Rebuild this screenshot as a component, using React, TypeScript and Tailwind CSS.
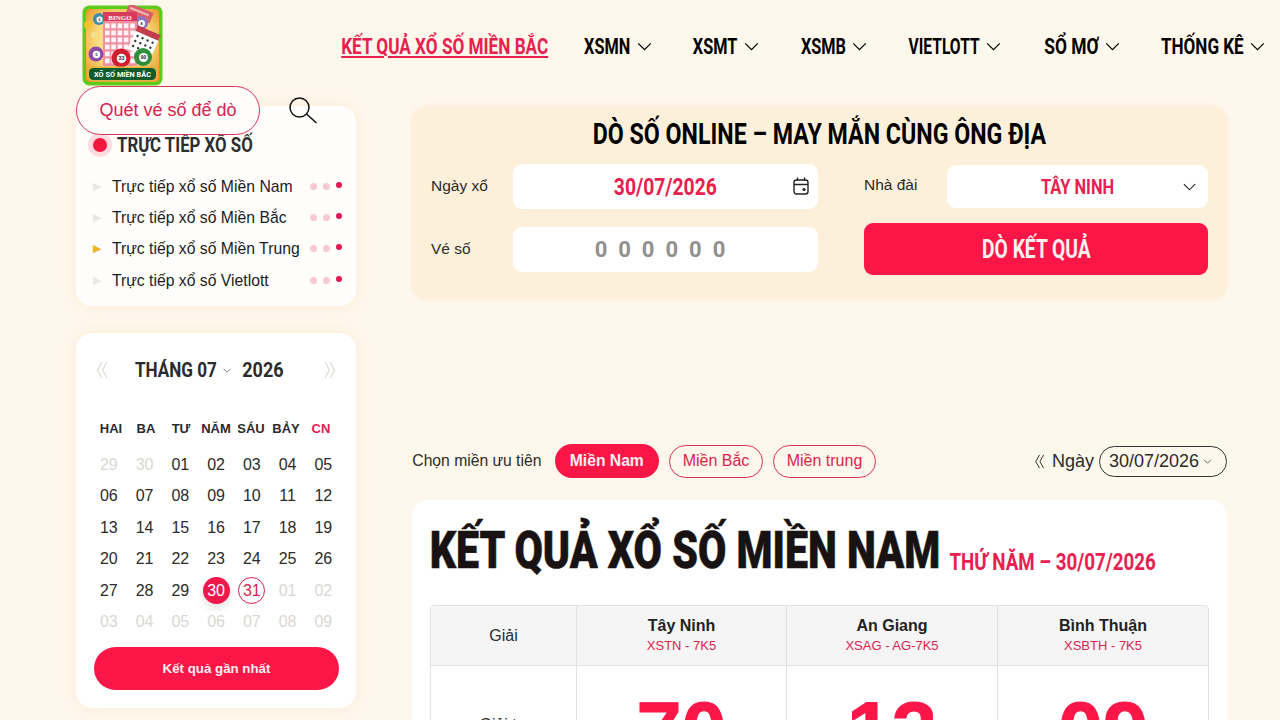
import React from "react";

const sans = "font-['Liberation_Sans',Arial,sans-serif]";
const cond = "font-['Roboto','Liberation_Sans',sans-serif]";

function Chevron({ className = "" }: { className?: string }) {
  return (
    <svg viewBox="0 0 16 10" className={className} fill="none" stroke="currentColor" strokeWidth="1.4">
      <path d="M1 1.5 8 8.5 15 1.5" />
    </svg>
  );
}

function Narrow({ w, s, className = "", children }: { w: string; s: string; className?: string; children: React.ReactNode }) {
  return (
    <span className={`flex shrink-0 justify-center whitespace-nowrap ${w} ${className}`}>
      <span className={`inline-block ${s}`}>{children}</span>
    </span>
  );
}

function Ball({ x, y, r, c, n }: { x: number; y: number; r: number; c: string; n: string }) {
  return (
    <g>
      <circle cx={x} cy={y} r={r} fill={c} />
      <circle cx={x + 0.5} cy={y + 0.5} r={r * 0.5} fill="#fff" />
      <text x={x + 0.5} y={y + 2} textAnchor="middle" fontSize={r * 0.55} fontWeight="700" fill="#222" fontFamily="Liberation Sans">{n}</text>
    </g>
  );
}

function Logo() {
  return (
    <svg viewBox="0 0 81 81" className="h-[81px] w-[81px]">
      <defs>
        <radialGradient id="lg" cx="50%" cy="45%" r="65%">
          <stop offset="0%" stopColor="#fff6c8" />
          <stop offset="60%" stopColor="#f8d677" />
          <stop offset="100%" stopColor="#ee9a2e" />
        </radialGradient>
      </defs>
      <rect x="0.5" y="0.5" width="80" height="80" rx="7" fill="#5ccb1c" />
      <rect x="4" y="4" width="73" height="73" rx="4" fill="url(#lg)" />
      <circle cx="6" cy="20" r="4" fill="#f5c22e" />
      <circle cx="12" cy="30" r="3" fill="#f6e08f" />
      <g transform="rotate(22 58 10)">
        <rect x="44" y="3" width="26" height="11" fill="#d9606b" />
        <rect x="46" y="6" width="20" height="2" fill="#f3b8b8" />
      </g>
      <Ball x={59} y={18} r={7} c="#8f76bd" n="8" />
      <Ball x={17} y={14} r={6} c="#3d8da6" n="6" />
      <rect x="21" y="7" width="34" height="54" rx="1" fill="#f0909f" />
      <rect x="21" y="7" width="34" height="9" fill="#d83a5c" />
      <text x="38" y="14.8" textAnchor="middle" fontSize="7" fontWeight="700" fill="#fff" fontFamily="Liberation Serif">BINGO</text>
      {[0, 1, 2, 3, 4, 5].map((r) =>
        [0, 1, 2, 3, 4].map((c) => (
          <rect key={`${r}-${c}`} x={23 + c * 6.3} y={18.5 + r * 7} width="4.6" height="4.8" fill="#fff" opacity="0.92" />
        ))
      )}
      <g transform="rotate(24 62 36)">
        <rect x="50" y="26" width="25" height="24" fill="#fff" />
        <rect x="50" y="24" width="25" height="6" fill="#c43d4f" />
        {[0, 1, 2].map((r) =>
          [0, 1, 2, 3].map((c) => (
            <circle key={`t${r}-${c}`} cx={54 + c * 5.5} cy={34 + r * 5.5} r="1.2" fill="#333" />
          ))
        )}
      </g>
      <Ball x={14} y={49} r={7.5} c="#8e4aa6" n="5" />
      <Ball x={39} y={53} r={9.5} c="#cf1f30" n="33" />
      <Ball x={61} y={52} r={9} c="#2f8f3d" n="90" />
      <rect x="5" y="61.5" width="71" height="15" rx="5" fill="#e0b43c" />
      <rect x="7" y="63" width="67" height="12" rx="4.5" fill="#0f5b2c" />
      <text x="40.5" y="72" textAnchor="middle" fontSize="8" fontWeight="700" fill="#fff" fontFamily="Roboto" textLength="57" lengthAdjust="spacingAndGlyphs">XỔ SỐ MIỀN BẮC</text>
    </svg>
  );
}

const navItems: [string, string, string, string][] = [
  ["XSMN", "w-[46px]", "ml-[7px] mr-[41px]", "scale-x-[0.74]"],
  ["XSMT", "w-[44px]", "ml-[7px] mr-[41px]", "scale-x-[0.74]"],
  ["XSMB", "w-[46px]", "ml-[6px] mr-[42px]", "scale-x-[0.74]"],
  ["VIETLOTT", "w-[71px]", "ml-[6px] mr-[42px]", "scale-x-[0.71]"],
  ["SỔ MƠ", "w-[56px]", "ml-[6px] mr-[41px]", "scale-x-[0.79]"],
  ["THỐNG KÊ", "w-[83px]", "ml-[6px] mr-0", "scale-x-[0.775]"],
];

function Header() {
  return (
    <header className="flex h-[86px] items-start">
      <div className="ml-[82px] mt-[5px] w-[81px] shrink-0">
        <Logo />
      </div>
      <nav className={`ml-[179px] mt-[35px] flex h-[24px] items-center text-[22px] font-bold leading-[24px] text-black ${cond}`}>
        <Narrow w="w-[206px]" s="scale-x-[0.78]" className="mr-[36px] text-[#e8204f] underline underline-offset-2">
          KẾT QUẢ XỔ SỐ MIỀN BẮC
        </Narrow>
        {navItems.map(([t, w, m, s]) => (
          <React.Fragment key={t}>
            <Narrow w={w} s={s}>{t}</Narrow>
            <Chevron className={`-mt-[2px] h-[9px] w-[15px] shrink-0 ${m}`} />
          </React.Fragment>
        ))}
      </nav>
    </header>
  );
}

const lives: [string, string][] = [
  ["Trực tiếp xổ số Miền Nam", "text-[#e9e9e3]"],
  ["Trực tiếp xổ số Miền Bắc", "text-[#e9e9e3]"],
  ["Trực tiếp xổ số Miền Trung", "text-[#eeb422]"],
  ["Trực tiếp xổ số Vietlott", "text-[#e9e9e3]"],
];

function LiveCard() {
  return (
    <section className="relative h-[200px] rounded-[16px] bg-white/90 pl-[17px] pr-[18px] pt-[26px] shadow-[0_0_14px_rgba(250,225,190,0.45)]">
      <div className="flex h-[26px] items-center">
        <span className="h-[14px] w-[14px] rounded-full bg-[#f6173f] shadow-[0_0_0_5px_rgba(246,23,63,0.16)]" />
        <Narrow w="w-[134px]" s="scale-x-[0.8]" className={`ml-[11px] text-[21px] font-bold leading-[26px] text-[#2e2e2e] ${cond}`}>
          TRỰC TIẾP XỔ SỐ
        </Narrow>
      </div>
      <ul className={`mt-[13px] flex flex-col text-[15.75px] leading-[31.2px] text-[#1c1c1c] ${sans}`}>
        {lives.map(([t, c]) => (
          <li key={t} className="flex h-[31.2px] items-center">
            <span className={`w-[19px] shrink-0 text-[11px] ${c}`}>▶</span>
            <span className="w-[198px] shrink-0 whitespace-nowrap">{t}</span>
            <span className="flex items-center gap-[6px]">
              <i className="h-[7px] w-[7px] rounded-full bg-[#f9c9d3]" />
              <i className="h-[7px] w-[7px] rounded-full bg-[#f9c9d3]" />
              <i className="-mt-[3px] h-[6px] w-[6px] rounded-full bg-[#e01a4f]" />
            </span>
          </li>
        ))}
      </ul>
    </section>
  );
}

const weeks: string[][] = [
  ["29", "30", "01", "02", "03", "04", "05"],
  ["06", "07", "08", "09", "10", "11", "12"],
  ["13", "14", "15", "16", "17", "18", "19"],
  ["20", "21", "22", "23", "24", "25", "26"],
  ["27", "28", "29", "30", "31", "01", "02"],
  ["03", "04", "05", "06", "07", "08", "09"],
];
const days = ["HAI", "BA", "TƯ", "NĂM", "SÁU", "BẢY", "CN"];

function DoubleChevron({ dir, className = "" }: { dir: "l" | "r"; className?: string }) {
  return (
    <svg viewBox="0 0 12 18" className={className} fill="none" stroke="currentColor" strokeWidth="1.1">
      {dir === "l" ? <path d="M6 1 1.5 9 6 17M11 1 6.5 9 11 17" /> : <path d="M1 1 5.5 9 1 17M6 1 10.5 9 6 17" />}
    </svg>
  );
}

function Calendar() {
  return (
    <section className={`mt-[27px] h-[375px] rounded-[16px] bg-white px-[15px] pt-[24px] shadow-[0_0_14px_rgba(250,225,190,0.45)] ${sans}`}>
      <div className="flex h-[26px] items-center pl-[5px] text-[#d9d9d3]">
        <DoubleChevron dir="l" className="h-[18px] w-[12px]" />
        <Narrow w="w-[81px]" s="scale-x-[0.855]" className={`ml-[27px] text-[20px] font-bold leading-[26px] text-[#2b2b2b] ${cond}`}>
          THÁNG 07
        </Narrow>
        <Chevron className="ml-[6px] h-[5px] w-[10px] text-[#444]" />
        <Narrow w="w-[42px]" s="scale-x-[0.9]" className={`ml-[10px] text-[20px] font-bold leading-[26px] text-[#2b2b2b] ${cond}`}>
          2026
        </Narrow>
        <DoubleChevron dir="r" className="ml-[43px] h-[18px] w-[12px] -translate-x-[3px]" />
      </div>
      <div className="ml-[2.5px] mt-[36px] grid grid-cols-[repeat(7,35px)] text-center text-[13px] font-bold leading-[20px] text-[#2b2b2b]">
        {days.map((d) => (
          <span key={d} className={`whitespace-nowrap ${d === "CN" ? "text-[#e01a4f]" : ""}`}>{d}</span>
        ))}
      </div>
      <div className="mt-[10px] grid grid-cols-[repeat(7,35.75px)] auto-rows-[31.5px] text-center text-[16px] text-[#2b2b2b]">
        {weeks.map((w, i) =>
          w.map((d, j) => {
            const muted = (i === 0 && j < 2) || (i === 4 && j > 4) || i === 5;
            if (i === 4 && j === 3)
              return (
                <span key={d + i} className="flex items-center justify-center">
                  <span className="flex h-[27px] w-[27px] items-center justify-center rounded-full bg-[#f0174a] text-white shadow-[0_4px_10px_rgba(0,0,0,0.12)]">{d}</span>
                </span>
              );
            if (i === 4 && j === 4)
              return (
                <span key={d + i} className="flex items-center justify-center">
                  <span className="flex h-[27px] w-[27px] items-center justify-center rounded-full border border-[#e01a4f] text-[#d81f4f]">{d}</span>
                </span>
              );
            return (
              <span key={d + i} className={`flex items-center justify-center ${muted ? "text-[#d8d8d2]" : ""}`}>{d}</span>
            );
          })
        )}
      </div>
      <button className="ml-[3px] mt-[9px] flex h-[43px] w-[245px] items-center justify-center rounded-full bg-[#fb1648] text-[13.3px] font-bold text-[#ffeef0]">
        Kết quả gần nhất
      </button>
    </section>
  );
}

function Sidebar() {
  return (
    <aside className="relative ml-[76px] mt-[20px] w-[280px] shrink-0">
      <LiveCard />
      <Calendar />
      <div className="absolute -top-[20px] left-0 flex items-center">
        <div className={`flex h-[49px] w-[184px] items-center justify-center rounded-full border border-[#d9305c] bg-[#fffdfa] text-[18px] text-[#d81f4f] ${sans}`}>
          Quét vé số để dò
        </div>
        <svg viewBox="0 0 30 30" className="ml-[28px] h-[30px] w-[30px]" fill="none" stroke="#111" strokeWidth="1.5">
          <circle cx="11.5" cy="11.5" r="9.5" />
          <path d="M18.5 18 28.5 27" />
        </svg>
      </div>
    </aside>
  );
}

function Lookup() {
  return (
    <section className="h-[193px] rounded-[16px] bg-[#fdf0da] pt-[13px] shadow-[0_0_4px_rgba(245,225,190,0.5)]">
      <div className="flex justify-center text-[29px] font-bold leading-[30px] text-black">
        <Narrow w="w-[452px]" s="scale-x-[0.8]" className={cond}>
          DÒ SỐ ONLINE – MAY MẮN CÙNG ÔNG ĐỊA
        </Narrow>
      </div>
      <div className={`mt-[15px] grid grid-cols-[82px_305px_46px_83px_261px] grid-rows-[45px_45px] items-center gap-y-[18px] pl-[19px] text-[15.5px] text-[#2b2b2b] ${sans}`}>
        <span className="-mt-[2px]">Ngày xổ</span>
        <div className="relative flex h-[45px] items-center justify-center rounded-[9px] bg-white pt-[3px]">
          <Narrow w="w-[103px]" s="scale-x-[0.84]" className={`text-[23px] font-bold text-[#e8204f] ${cond}`}>30/07/2026</Narrow>
          <svg viewBox="0 0 16 18" className="absolute right-[9px] top-[13px] h-[18px] w-[16px]" fill="none" stroke="#222" strokeWidth="1.4">
            <rect x="1" y="3" width="14" height="14" rx="2.5" />
            <path d="M1 7.5h14M4.5 0.5v3M11.5 0.5v3" />
            <circle cx="11" cy="12.5" r="1.6" fill="#222" stroke="none" />
          </svg>
        </div>
        <span />
        <span className="-mt-[4px]">Nhà đài</span>
        <div className="relative flex h-[43px] items-center justify-center rounded-[9px] bg-white">
          <Narrow w="w-[74px]" s="scale-x-[0.82]" className={`text-[20px] font-bold text-[#e8204f] ${cond}`}>TÂY NINH</Narrow>
          <Chevron className="absolute right-[12px] top-[18px] h-[8px] w-[13px] text-[#222]" />
        </div>
        <span className="-mt-[2px]">Vé số</span>
        <div className={`flex h-[45px] items-center justify-center rounded-[9px] bg-white text-[22px] font-bold tracking-[11px] text-[#909090] ${cond}`}>
          000000
        </div>
        <span />
        <button className={`col-span-2 -mt-[1px] flex h-[52px] items-center justify-center rounded-[9px] bg-[#fb1648] text-[26px] font-bold text-[#fff0f0] ${cond}`}>
          <Narrow w="w-[110px]" s="scale-x-[0.74]">DÒ KẾT QUẢ</Narrow>
        </button>
      </div>
    </section>
  );
}

function Filter() {
  return (
    <div className={`mt-[145px] flex h-[34px] items-center text-[16px] text-[#2b2b2b] ${sans}`}>
      <Narrow w="w-[130px]" s="scale-x-[0.98]">Chọn miền ưu tiên</Narrow>
      <span className="ml-[13px] flex h-[34px] w-[104px] items-center justify-center rounded-full bg-[#fb1648] font-bold text-[#fff0f0]">
        <Narrow w="w-[74px]" s="scale-x-[0.98]">Miền Nam</Narrow>
      </span>
      <span className="ml-[10px] flex h-[33px] w-[94px] items-center justify-center rounded-full border border-[#d9305c] text-[#d81f4f]">Miền Bắc</span>
      <span className="ml-[10px] flex h-[33px] w-[103px] items-center justify-center rounded-full border border-[#d9305c] text-[#d81f4f]">Miền trung</span>
      <DoubleChevron dir="l" className="ml-[158px] h-[15px] w-[11px] text-[#222]" />
      <span className="ml-[7px] text-[18px]">Ngày</span>
      <span className="ml-[5px] flex h-[31px] w-[128px] items-center gap-[4px] rounded-full border border-[#333] pl-[9px] text-[18px]">
        30/07/2026
        <Chevron className="h-[5px] w-[9px]" />
      </span>
    </div>
  );
}

const cols: [string, string, string][] = [
  ["Tây Ninh", "XSTN - 7K5", "70"],
  ["An Giang", "XSAG - AG-7K5", "13"],
  ["Bình Thuận", "XSBTH - 7K5", "09"],
];

function Results() {
  return (
    <section className="mt-[22px] h-[260px] rounded-t-[16px] bg-white pl-[18px] pr-[18px] pt-[21px]">
      <div className="flex h-[60px] items-end">
        <Narrow w="w-[509px]" s="scale-x-[0.79]" className={`text-[52px] font-black leading-[60px] text-[#181312] [-webkit-text-stroke:0.6px_#181312] ${cond}`}>
          KẾT QUẢ XỔ SỐ MIỀN NAM
        </Narrow>
        <Narrow w="w-[206px]" s="scale-x-[0.815]" className={`mb-[4px] ml-[11px] text-[23px] font-bold leading-[28px] text-[#e8204f] ${cond}`}>
          THỨ NĂM – 30/07/2026
        </Narrow>
      </div>
      <div className={`mt-[24px] overflow-hidden rounded-t-[4px] border border-[#e2e2e2] ${sans}`}>
        <div className="grid grid-cols-[145px_210px_211px_1fr] bg-[#f5f5f5] text-center">
          <div className="flex h-[59px] items-center justify-center text-[16px] text-[#2b2b2b]">Giải</div>
          {cols.map(([n, c]) => (
            <div key={n} className="flex h-[59px] flex-col items-center justify-center border-l border-[#e2e2e2]">
              <span className="text-[16px] font-bold leading-[20px] text-[#222]">{n}</span>
              <span className="text-[13px] leading-[19px] text-[#d81f4f]">{c}</span>
            </div>
          ))}
        </div>
        <div className="grid grid-cols-[145px_210px_211px_1fr] items-start border-t border-[#e2e2e2] bg-white text-center">
          <div className="flex h-[118px] items-center justify-center text-[16px] text-[#2b2b2b]">Giải tư</div>
          {cols.map(([n, , v]) => (
            <div key={n} className="flex h-[120px] justify-center border-l border-[#e2e2e2] pt-[25px] text-[81px] font-bold leading-[81px] text-[#fb1648] [-webkit-text-stroke:1px_#fb1648]">
              {v}
            </div>
          ))}
        </div>
      </div>
    </section>
  );
}

export default function App() {
  return (
    <div className="h-[720px] w-[1280px] overflow-hidden bg-[#fef7ec]">
      <Header />
      <div className="flex">
        <Sidebar />
        <main className="ml-[56px] mt-[20px] w-[815px] shrink-0">
          <Lookup />
          <Filter />
          <Results />
        </main>
      </div>
    </div>
  );
}
